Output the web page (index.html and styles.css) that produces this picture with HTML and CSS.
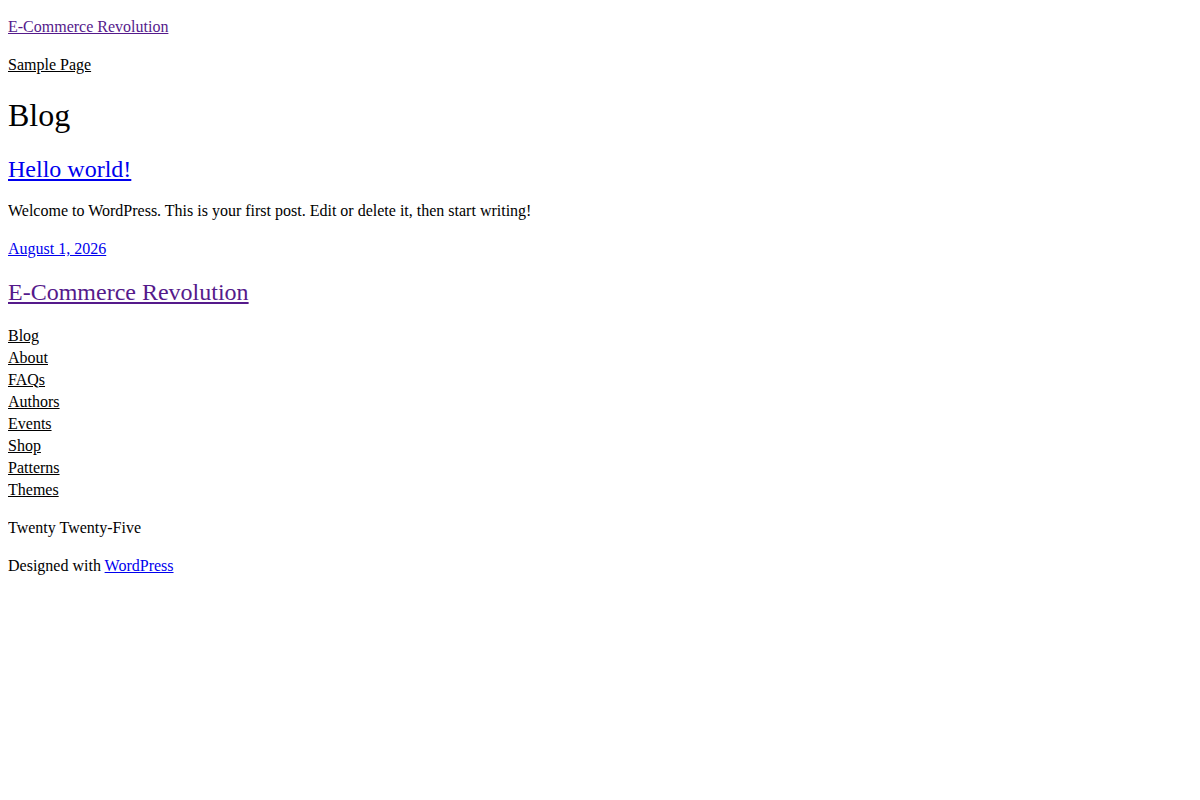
FILE: index.html
```html
<!DOCTYPE html>
<html lang="en">
<head>
<meta charset="utf-8">
<title>Blog – E-Commerce Revolution</title>
<link rel="stylesheet" href="styles.css">
</head>
<body>
<header class="site-header">
  <p class="text-line"><a class="visited" href="#">E-Commerce Revolution</a></p>
  <p class="text-line"><a class="plain" href="#">Sample Page</a></p>
</header>
<main>
  <h1 class="page-title">Blog</h1>
  <article>
    <h2 class="post-title"><a class="link" href="#">Hello world!</a></h2>
    <p class="text-line">Welcome to WordPress. This is your first post. Edit or delete it, then start writing!</p>
    <p class="text-line"><a class="link" href="#">August 1, 2026</a></p>
  </article>
</main>
<footer class="site-footer">
  <h2 class="footer-title"><a class="visited" href="#">E-Commerce Revolution</a></h2>
  <nav class="footer-nav">
    <a class="plain" href="#">Blog</a>
    <a class="plain" href="#">About</a>
    <a class="plain" href="#">FAQs</a>
    <a class="plain" href="#">Authors</a>
    <a class="plain" href="#">Events</a>
    <a class="plain" href="#">Shop</a>
    <a class="plain" href="#">Patterns</a>
    <a class="plain" href="#">Themes</a>
  </nav>
  <p class="text-line">Twenty Twenty-Five</p>
  <p class="text-line">Designed with <a class="link" href="#">WordPress</a></p>
</footer>
</body>
</html>
```
FILE: styles.css
```css
html, body {
  background: #ffffff;
}
body {
  margin: 0 8px 8px;
  font-family: "Liberation Serif", "Times New Roman", serif;
  font-size: 16px;
  color: #000000;
}
.site-header {
  padding-top: 16px;
}
.site-header .text-line:first-child {
  margin-top: 0;
}
.text-line {
  margin: 16px 0;
  line-height: 22px;
}
.page-title {
  font-size: 32px;
  font-weight: normal;
  margin: 21.44px 0 21.44px;
  line-height: normal;
}
.post-title {
  font-size: 24px;
  font-weight: normal;
  margin: 19.92px 0 16.92px;
  line-height: normal;
}
.footer-title {
  font-size: 24px;
  font-weight: normal;
  margin: 18.92px 0 18.92px;
  line-height: normal;
}
.footer-nav {
  display: flex;
  flex-direction: column;
  align-items: flex-start;
  line-height: 22px;
}
.link {
  color: #0000ee;
  text-decoration: underline;
}
.visited {
  color: #551a8b;
  text-decoration: underline;
}
.plain {
  color: #000000;
  text-decoration: underline;
}
```
